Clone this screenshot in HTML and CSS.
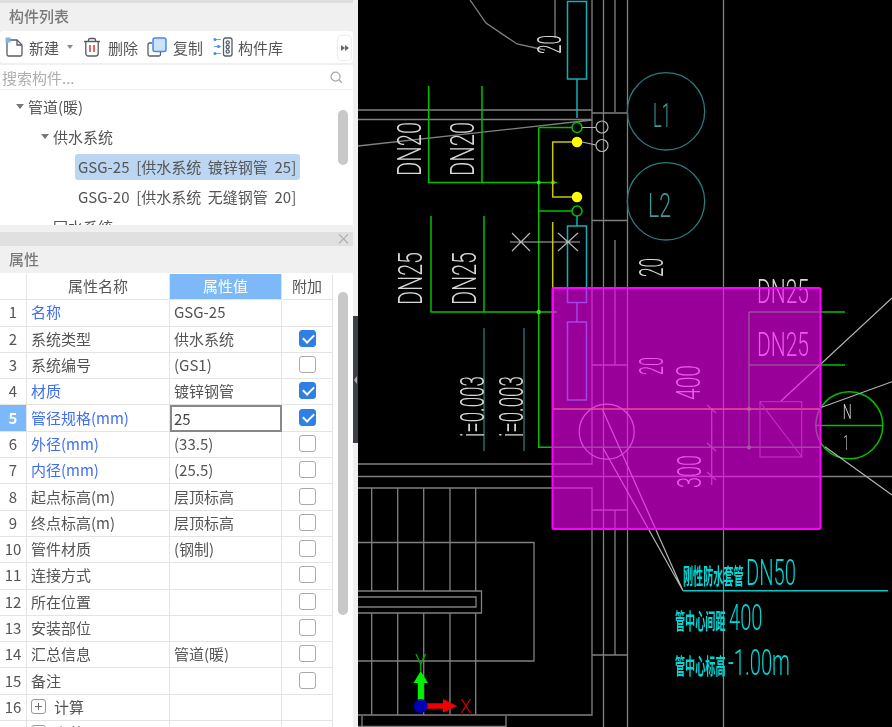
FILE: index.html
```html
<!DOCTYPE html>
<html lang="zh">
<head>
<meta charset="utf-8">
<title>构件列表</title>
<link rel="stylesheet" href="styles.css">
</head>
<body>
<div class="app">
  <aside class="sidebar">
    <div class="panel-title list-title">构件列表</div>
    <div class="toolbar">
      <button class="tool tool-new">
        <svg class="icon" viewBox="0 0 20 20"><path class="i-line" d="M3 3h10l5 5v9.500a1.500 1.500 0 0 1-1.500 1.500h-12A1.500 1.500 0 0 1 3 17.500z"/><path class="i-line" d="M13 3v5h5"/><rect class="i-blue" x="1.500" y="0.500" width="5" height="5"/></svg>
        <span>新建</span>
      </button>
      <span class="caret"></span>
      <button class="tool tool-del">
        <svg class="icon" viewBox="0 0 20 20"><path class="i-line" d="M2 4.500h16M6.500 4.500V3a1.500 1.500 0 0 1 1.500-1.500h4A1.500 1.500 0 0 1 13.500 3v1.500M3.800 4.500v12a2.500 2.500 0 0 0 2.500 2.500h7.400a2.500 2.500 0 0 0 2.500-2.500v-12"/><path class="i-red" d="M8 8v7M12 8v7"/></svg>
        <span>删除</span>
      </button>
      <button class="tool tool-copy">
        <svg class="icon" viewBox="0 0 20 20"><path class="i-line" d="M5 6H2.500A1.500 1.500 0 0 0 1 7.500v10A1.500 1.500 0 0 0 2.500 19H12a1.500 1.500 0 0 0 1.500-1.500V15"/><rect class="i-front" x="6" y="1" width="13" height="13.500" rx="2"/></svg>
        <span>复制</span>
      </button>
      <button class="tool tool-lib">
        <svg class="icon" viewBox="0 0 20 20"><path class="i-conn" d="M1 2.500h7M1 9.500h7M1 16.500h7"/><circle class="i-dot" cx="2" cy="2.500" r="1.500"/><circle class="i-dot" cx="5.500" cy="9.500" r="1.500"/><circle class="i-dot" cx="2" cy="16.500" r="1.500"/><rect class="i-line" x="10.500" y="1" width="8.500" height="18" rx="2"/><circle class="i-line" cx="14.700" cy="5.500" r="1.600"/><circle class="i-line" cx="14.700" cy="10" r="1.600"/><circle class="i-line" cx="14.700" cy="14.500" r="1.600"/></svg>
        <span>构件库</span>
      </button>
      <button class="more"><span class="tri"></span><span class="tri"></span></button>
    </div>
    <div class="search">
      <span class="search-text">搜索构件...</span>
      <svg class="search-icon" viewBox="0 0 14 14"><circle cx="6" cy="6" r="4.800"/><path d="M9.500 9.500L12.800 12.800"/></svg>
    </div>
    <div class="tree">
      <div class="tree-row lvl1"><span class="arrow"></span>管道(暖)</div>
      <div class="tree-row lvl2"><span class="arrow"></span>供水系统</div>
      <div class="tree-row lvl3"><span class="leaf selected">GSG-25 [供水系统 镀锌钢管 25]</span></div>
      <div class="tree-row lvl3"><span class="leaf">GSG-20 [供水系统 无缝钢管 20]</span></div>
      <div class="tree-row lvl2 last">回水系统</div>
      <div class="thumb tree-thumb"></div>
    </div>
    <div class="gap"></div>
    <div class="close-bar"><span class="close">×</span></div>
    <div class="panel-title prop-title">属性</div>
    <div class="table-wrap">
      <div class="table">
        <div class="row head"><div class="c num"></div><div class="c name center">属性名称</div><div class="c val center active">属性值</div><div class="c add center">附加</div></div>
        <div class="row"><div class="c num">1</div><div class="c name blue">名称</div><div class="c val">GSG-25</div><div class="c add"></div></div>
        <div class="row"><div class="c num">2</div><div class="c name">系统类型</div><div class="c val">供水系统</div><div class="c add"><span class="cb on"></span></div></div>
        <div class="row"><div class="c num">3</div><div class="c name">系统编号</div><div class="c val">(GS1)</div><div class="c add"><span class="cb"></span></div></div>
        <div class="row"><div class="c num">4</div><div class="c name blue">材质</div><div class="c val">镀锌钢管</div><div class="c add"><span class="cb on"></span></div></div>
        <div class="row"><div class="c num cur">5</div><div class="c name blue">管径规格(mm)</div><div class="c val edit">25</div><div class="c add"><span class="cb on"></span></div></div>
        <div class="row"><div class="c num">6</div><div class="c name blue">外径(mm)</div><div class="c val">(33.5)</div><div class="c add"><span class="cb"></span></div></div>
        <div class="row"><div class="c num">7</div><div class="c name blue">内径(mm)</div><div class="c val">(25.5)</div><div class="c add"><span class="cb"></span></div></div>
        <div class="row"><div class="c num">8</div><div class="c name">起点标高(m)</div><div class="c val">层顶标高</div><div class="c add"><span class="cb"></span></div></div>
        <div class="row"><div class="c num">9</div><div class="c name">终点标高(m)</div><div class="c val">层顶标高</div><div class="c add"><span class="cb"></span></div></div>
        <div class="row"><div class="c num">10</div><div class="c name">管件材质</div><div class="c val">(钢制)</div><div class="c add"><span class="cb"></span></div></div>
        <div class="row"><div class="c num">11</div><div class="c name">连接方式</div><div class="c val"></div><div class="c add"><span class="cb"></span></div></div>
        <div class="row"><div class="c num">12</div><div class="c name">所在位置</div><div class="c val"></div><div class="c add"><span class="cb"></span></div></div>
        <div class="row"><div class="c num">13</div><div class="c name">安装部位</div><div class="c val"></div><div class="c add"><span class="cb"></span></div></div>
        <div class="row"><div class="c num">14</div><div class="c name">汇总信息</div><div class="c val">管道(暖)</div><div class="c add"><span class="cb"></span></div></div>
        <div class="row"><div class="c num">15</div><div class="c name">备注</div><div class="c val"></div><div class="c add"><span class="cb"></span></div></div>
        <div class="row"><div class="c num">16</div><div class="c name"><span class="plus"></span>计算</div><div class="c val"></div><div class="c add"></div></div>
        <div class="row"><div class="c num">17</div><div class="c name"><span class="plus"></span>安装</div><div class="c val"></div><div class="c add"></div></div>
      </div>
      <div class="thumb table-thumb"></div>
    </div>
  </aside>
  <div class="splitter"><div class="handle"><span class="handle-tri"></span></div></div>
  <svg class="cad" viewBox="358 0 534 727" aria-label="CAD">
    <g class="grey">
      <path d="M555 0V38M470 0L486 23L517 44L545 50M592 0V464H358M603.500 0V727M615 0V112M615 240V365M592 113H627.500M592 365H627.500M592 220.500H627.500M627.500 0V727M723.500 0V727"/>
      <path d="M358 110H592M358 119.500H592M358 146L592 120M358 476.500H892M358 488H592V715H358"/>
      <path d="M371.700 488V591M397.700 488V591M423.700 488V591M450 488V591M475.700 488V591M371.700 613V715M397.700 613V715M423.700 613V715M450 613V715M475.700 613V715"/>
      <path d="M358 542.500H534V661H358M358 591H481.500V613H358M358 597H476V607H358M592 510H627.500M592 655H627.500M615 510V655M362 716V727M506 716V727M358 726.300H506"/>
      <path d="M711.700 408V485M707 405L716 413M707 443L716 451M707 472L716 480"/>
    </g>
    <g class="teal">
      <rect x="567.500" y="1.500" width="19" height="77.500"/>
      <rect x="567.500" y="226" width="19" height="76.500"/>
      <rect x="567.500" y="322" width="19" height="78"/>
      <path d="M577 79V118M577 216V226M577 302.500V322"/>
    </g>
    <g class="green">
      <path d="M428.700 86V182.500H557M482 86V182.500M431 216V312H557M484 216V312M538.700 127.500H572M538.700 211H572M538.700 127.500V447.300H820M749 312V447M749 312H845M749 365H845"/>
      <circle cx="577" cy="127.500" r="5"/>
      <circle cx="577" cy="211" r="5"/>
      <circle class="ring" cx="849.300" cy="425.300" r="33.500"/>
      <path d="M815 425.500H882"/>
    </g>
    <g class="lgdots">
      <circle cx="538.700" cy="182.500" r="2"/><circle cx="553" cy="182.500" r="2"/><circle cx="538.700" cy="312" r="2.200"/><circle cx="553" cy="312" r="1.500"/>
      <circle cx="749" cy="409" r="2"/><circle cx="749" cy="447.500" r="2"/>
    </g>
    <g class="yellow">
      <path d="M577 142H552.700V197H577M552.700 222V409H820"/>
      <circle class="solid" cx="577" cy="142" r="4.500"/>
      <circle class="solid" cx="577" cy="197" r="4.500"/>
    </g>
    <g class="white">
      <circle cx="602" cy="127" r="6"/>
      <circle cx="602" cy="145.500" r="6"/>
      <path d="M582 127.500H596M582 142L596 145M510 242H580M512 233L530 251M530 233L512 251M558 233L578 251M578 233L558 251"/>
      <circle cx="606.700" cy="431.700" r="27.500"/>
      <path d="M602.700 410L683 590.700M603 448L683 590.700M781 401L892 298M821.700 407.300L892 381.700M825 446.700L892 495"/>
    </g>
    <g class="faint">
      <rect x="760" y="401.700" width="41.700" height="55.300"/>
      <path d="M760 402L802 457"/>
    </g>
    <g class="dim">
      <path d="M484 328V451M524 328V451"/>
      <circle cx="666" cy="111.300" r="38.700"/>
      <circle cx="666" cy="201.300" r="38.700"/>
    </g>
    <g class="ct">
      <text class="s34" transform="translate(561,54) rotate(-90)" textLength="19" lengthAdjust="spacingAndGlyphs">20</text>
      <text class="s34" transform="translate(421,176) rotate(-90)" textLength="54" lengthAdjust="spacingAndGlyphs">DN20</text>
      <text class="s34" transform="translate(474,176) rotate(-90)" textLength="54" lengthAdjust="spacingAndGlyphs">DN20</text>
      <text class="s34" transform="translate(422,305) rotate(-90)" textLength="53" lengthAdjust="spacingAndGlyphs">DN25</text>
      <text class="s34" transform="translate(476,305) rotate(-90)" textLength="53" lengthAdjust="spacingAndGlyphs">DN25</text>
      <text class="s34" transform="translate(484,437) rotate(-90)" textLength="61" lengthAdjust="spacingAndGlyphs">i=0.003</text>
      <text class="s34" transform="translate(523,437) rotate(-90)" textLength="61" lengthAdjust="spacingAndGlyphs">i=0.003</text>
      <text class="s34" transform="translate(663,277) rotate(-90)" textLength="19" lengthAdjust="spacingAndGlyphs">20</text>
      <text class="s34" transform="translate(663,375) rotate(-90)" textLength="18" lengthAdjust="spacingAndGlyphs">20</text>
      <text class="s34" transform="translate(700,400) rotate(-90)" textLength="35" lengthAdjust="spacingAndGlyphs">400</text>
      <text class="s34" transform="translate(701,488) rotate(-90)" textLength="33" lengthAdjust="spacingAndGlyphs">300</text>
      <text class="s34" x="757" y="303" textLength="52" lengthAdjust="spacingAndGlyphs">DN25</text>
      <text class="s34" x="757" y="355.500" textLength="52" lengthAdjust="spacingAndGlyphs">DN25</text>
      <text class="s20" x="842.700" y="419" textLength="9" lengthAdjust="spacingAndGlyphs">N</text>
      <text class="s20" x="843.500" y="450" textLength="5" lengthAdjust="spacingAndGlyphs">1</text>
    </g>
    <g class="ct tealtext">
      <text class="s34" x="653" y="126.500" textLength="18" lengthAdjust="spacingAndGlyphs">L1</text>
      <text class="s34" x="648" y="217" textLength="23" lengthAdjust="spacingAndGlyphs">L2</text>
    </g>
    <rect class="mag-fill" x="552.500" y="288" width="268" height="241"/>
    <rect class="mag-edge" x="552.500" y="288" width="268" height="241" rx="1.500"/>
    <path class="leader" d="M683 590.700H888"/>
    <g class="ct cyan">
      <text class="cjk" transform="translate(683,584) scale(.46,1)">刚性防水套管</text>
      <text class="s36" transform="translate(746,585) scale(.56,1)">DN50</text>
      <text class="cjk" transform="translate(675,629) scale(.46,1)">管中心间距</text>
      <text class="s36" transform="translate(729,630) scale(.56,1)">400</text>
      <text class="cjk" transform="translate(675,674) scale(.46,1)">管中心标高</text>
      <text class="s36" transform="translate(728,675) scale(.56,1)">-1.00m</text>
    </g>
    <path class="ax-g" d="M417.800 704V683H413.500L420.700 671L428 683H423.700V704z"/>
    <path class="ax-r" d="M424 703.200H443V699L457 706L443 712.800V708.800H424z"/>
    <circle class="ax-b" cx="420.700" cy="706" r="7"/>
    <path class="ax-yt" d="M416 654L420.700 664L425.500 654M420.700 664V671"/>
    <path class="ax-xt" d="M461.500 699L470.500 713M470.500 699L461.500 713"/>
  </svg>
</div>
</body>
</html>
```

FILE: styles.css
```css
* { box-sizing: border-box; }
html, body { margin: 0; padding: 0; height: 727px; overflow: hidden; background: #000; }
body { font-family: "Noto Sans CJK SC", "Noto Sans", sans-serif; font-size: 15px; color: #555; }
button { font: inherit; color: inherit; background: none; border: 0; padding: 0; }

.app { display: flex; width: 892px; height: 727px; }
.sidebar { width: 353px; height: 727px; flex: none; display: flex; flex-direction: column; background: #f0f0f0; border-top: 3px solid #dedede; filter: blur(.35px); overflow: hidden; }

.panel-title { padding: 0 0 3px 9px; color: #7a7a7a; font-weight: 500; display: flex; align-items: center; }
.list-title { height: 28px; }
.prop-title { height: 27px; }

.toolbar { height: 32px; flex: none; background: #fff; border-radius: 4px; display: flex; align-items: center; padding-left: 4px; position: relative; color: #555; }
.tool { display: flex; align-items: center; }
.icon { width: 20px; height: 20px; flex: none; overflow: visible; }
.tool-new { gap: 5px; }
.tool-del { margin-left: 9px; gap: 6px; }
.tool-copy { margin-left: 9px; gap: 6px; }
.tool-lib { margin-left: 10px; gap: 5px; }
.caret { width: 0; height: 0; margin-left: 8px; border: 3px solid transparent; border-top: 4px solid #888; border-bottom: 0; }
.i-line { fill: none; stroke: #555c66; stroke-width: 1.3; }
.i-blue { fill: #7fb2f0; }
.i-red { fill: none; stroke: #e0403a; stroke-width: 1.6; }
.i-front { fill: #cfe2fb; stroke: #3d8df0; stroke-width: 1.5; }
.i-conn { fill: none; stroke: #6aa5ee; stroke-width: 1.2; }
.i-dot { fill: #3d8df0; }
.more { position: absolute; right: 1px; top: 4px; width: 15px; height: 26px; border: 1px solid #eee; border-radius: 4px; display: flex; align-items: center; justify-content: center; }
.tri { width: 0; height: 0; border: 3px solid transparent; border-left: 4px solid #666; border-right: 0; }

.search { height: 24px; flex: none; margin-top: 2px; background: #fff; display: flex; align-items: center; justify-content: space-between; padding: 0 10px 0 2px; color: #aeaeae; }
.search-icon { width: 13px; height: 13px; fill: none; stroke: #aaa; stroke-width: 1.400; }

.tree { height: 135px; flex: none; margin-top: 1px; background: #fff; position: relative; overflow: hidden; padding-top: 2px; }
.tree-row { height: 30px; display: flex; align-items: center; color: #555; padding-bottom: 1px; }
.lvl1 { padding-left: 16px; }
.lvl2 { padding-left: 41px; }
.lvl3 { padding-left: 75px; padding-bottom: 0; }
.last { padding-left: 53px; }
.arrow { width: 0; height: 0; margin-right: 4px; border: 4px solid transparent; border-top: 5px solid #777; border-bottom: 0; }
.leaf { height: 26px; width: 225px; padding: 0 0 2px 3px; display: flex; align-items: center; border-radius: 3px; white-space: pre; word-spacing: 3.300px; }
.selected { background: #bcd6f1; }
.thumb { position: absolute; width: 10px; background: #c8c8c8; border-radius: 5px; }
.tree-thumb { left: 338px; top: 20px; height: 55px; }

.gap { height: 7px; flex: none; }
.close-bar { height: 14px; flex: none; background: #e0e0e0; position: relative; }
.close { position: absolute; right: 2px; top: -4px; font-size: 15px; line-height: 20px; color: #aaa; }

.table-wrap { flex: 1; background: #fff; position: relative; overflow: hidden; padding-top: 1px; }
.table { width: 333px; }
.row { display: grid; grid-template-columns: 27px 143px 112px 51px; height: 26.3px; }
.c { border-right: 1px solid #e4e4e4; border-bottom: 1px solid #e4e4e4; display: flex; align-items: center; white-space: nowrap; overflow: hidden; padding-bottom: 2px; }
.num { justify-content: center; }
.name { padding-left: 4px; }
.val { padding-left: 4px; }
.add { justify-content: center; }
.center { justify-content: center; padding-left: 0; }
.blue { color: #3f6ff0; }
.active { background: #7db8f8; color: #fff; }
.cur { background: #7db8f8; color: #fff; font-weight: 700; }
.edit { border: 2px solid #888; padding-left: 2px; padding-bottom: 0; background: #fff; color: #444; }
.cb { width: 17px; height: 17px; border: 1.400px solid #aaa; border-radius: 3px; background: #fff; position: relative; }
.cb.on { background: #2f80e4; border-color: #2f80e4; }
.cb.on::after { content: ""; position: absolute; left: 3px; top: 3px; width: 9px; height: 5px; border-left: 2px solid #fff; border-bottom: 2px solid #fff; transform: rotate(-45deg); }
.plus { width: 15px; height: 15px; margin-right: 8px; border: 1px solid #999; border-radius: 3px; position: relative; flex: none; }
.plus::before { content: ""; position: absolute; left: 3px; top: 6px; width: 7px; height: 1px; background: #666; }
.plus::after { content: ""; position: absolute; left: 6px; top: 3px; width: 1px; height: 7px; background: #666; }
.table-thumb { left: 338px; top: 19px; height: 323px; }

.splitter { width: 5px; flex: none; background: #f0f0f0; position: relative; }
.handle { position: absolute; left: 0; top: 316px; width: 5px; height: 127px; background: #3c3f43; display: flex; align-items: center; justify-content: center; }
.handle-tri { width: 0; height: 0; border: 4px solid transparent; border-right: 3px solid #aaa; border-left: 0; }

.cad { width: 534px; height: 727px; flex: none; display: block; background: #000; filter: blur(.35px); }
.cad path, .cad rect, .cad circle { fill: none; }
.grey { stroke: #808080; stroke-width: 1.300; }
.teal { stroke: #14aeb8; stroke-width: 1.500; }
.green { stroke: #00c000; stroke-width: 1.500; }
.cad .lgdots circle { fill: #40d040; }
.yellow { stroke: #c8c800; stroke-width: 1.500; }
.cad .yellow .solid { fill: #ffff00; stroke: #ffff00; }
.white { stroke: #b4b4b4; stroke-width: 1.200; }
.faint { stroke: #707070; stroke-width: 1.100; }
.dim { stroke: #2a7a7e; stroke-width: 1.300; }
.ct { font-family: Roboto, "Liberation Sans", sans-serif; font-weight: 300; fill: #d8d8d8; }
.tealtext { fill: #3f9a9a; }
.s34 { font-size: 34px; }
.s36 { font-size: 36px; }
.s20 { font-size: 20px; font-weight: 300; }
.cjk { font-family: "Noto Sans CJK SC", sans-serif; font-size: 22px; font-weight: 700; }
.ct.cyan { fill: #00d8d8; }
.cad .mag-fill { fill: #ff00ff; fill-opacity: .6; stroke: none; }
.cad .mag-edge { stroke: #ff00ff; stroke-width: 2; }
.leader { stroke: #00c8c8; stroke-width: 1.500; }
.cad .ax-g { fill: #00f000; }
.cad .ax-r { fill: #f00000; }
.cad .ax-b { fill: #0000b0; }
.ax-yt { stroke: #00b000; stroke-width: 1.300; }
.ax-xt { stroke: #d00000; stroke-width: 1.300; }
```
